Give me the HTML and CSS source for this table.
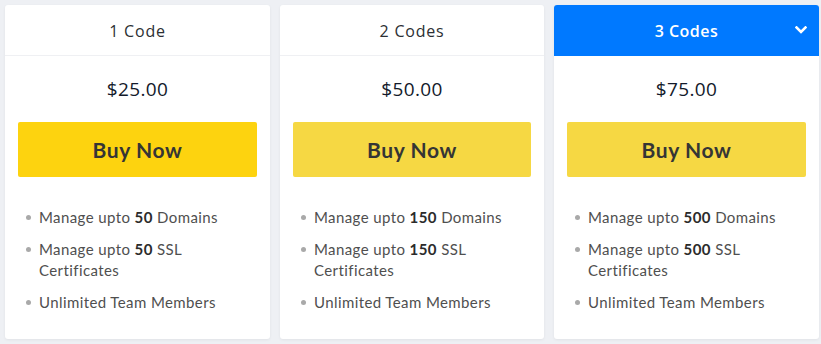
FILE: index.html
```html
<!DOCTYPE html>
<html>
<head>
<meta charset="utf-8">
<link rel="stylesheet" href="styles.css">
</head>
<body>
<div class="plans">
  <div class="card">
    <div class="head">1 Code</div>
    <div class="price">$25.00</div>
    <div class="btn-wrap"><button class="buy buy-strong">Buy Now</button></div>
    <ul class="features">
      <li>Manage upto <b>50</b> Domains</li>
      <li>Manage upto <b>50</b> SSL Certificates</li>
      <li>Unlimited Team Members</li>
    </ul>
  </div>
  <div class="card">
    <div class="head">2 Codes</div>
    <div class="price">$50.00</div>
    <div class="btn-wrap"><button class="buy">Buy Now</button></div>
    <ul class="features">
      <li>Manage upto <b>150</b> Domains</li>
      <li>Manage upto <b>150</b> SSL Certificates</li>
      <li>Unlimited Team Members</li>
    </ul>
  </div>
  <div class="card">
    <div class="head head-active">3 Codes
      <svg class="chev" width="12" height="8" viewBox="0 0 12 8"><path d="M1.5 1.5 L6 6 L10.5 1.5" fill="none" stroke="#fff" stroke-width="2.6" stroke-linecap="square"/></svg>
    </div>
    <div class="price">$75.00</div>
    <div class="btn-wrap"><button class="buy">Buy Now</button></div>
    <ul class="features">
      <li>Manage upto <b>500</b> Domains</li>
      <li>Manage upto <b>500</b> SSL Certificates</li>
      <li>Unlimited Team Members</li>
    </ul>
  </div>
</div>
</body>
</html>
```
FILE: styles.css
```css
html, body {
  margin: 0;
  padding: 0;
  background: #eef0f4;
}
body {
  width: 821px;
  height: 344px;
  overflow: hidden;
}
.plans {
  display: grid;
  grid-template-columns: 265px 264px 265px;
  gap: 10px;
  padding: 5px 2px 0 5px;
}
.card {
  background: #fff;
  height: 334px;
  border-radius: 3px;
  box-shadow: 0 1px 3px rgba(0,0,0,0.06);
  display: flex;
  flex-direction: column;
  overflow: hidden;
}
.head {
  height: 49px;
  padding-top: 1px;
  border-bottom: 1px solid #eff0f3;
  display: flex;
  align-items: center;
  justify-content: center;
  font-family: "Open Sans", sans-serif;
  font-size: 16px;
  letter-spacing: 0.8px;
  color: #2c2f33;
  position: relative;
}
.head-active {
  background: #0079ff;
  color: #fff;
  font-weight: 600;
  letter-spacing: 0.5px;
  border-bottom-color: #0079ff;
}
.chev {
  position: absolute;
  right: 12px;
  top: 21px;
}
.price {
  height: 66px;
  display: flex;
  align-items: center;
  justify-content: center;
  font-family: "Open Sans", sans-serif;
  font-size: 19px;
  letter-spacing: 0.4px;
  color: #131a2b;
  font-weight: 500;
}
.btn-wrap {
  padding: 0 13px;
}
.buy {
  width: 100%;
  height: 55px;
  border: none;
  border-radius: 2px;
  background: #f6d843;
  font-family: "Lato", sans-serif;
  font-weight: 700;
  font-size: 21px;
  color: #353535;
  padding: 0 0 1px 0;
  letter-spacing: 0.6px;
}
.buy-strong {
  background: #fdd30f;
}
.features {
  list-style: none;
  margin: 0;
  padding: 30px 15px 0 20px;
  font-family: "Lato", sans-serif;
  font-size: 15px;
  letter-spacing: 0.4px;
  color: #4f4f4f;
  line-height: 21px;
}
.features li {
  position: relative;
  padding-left: 14px;
  margin-bottom: 11px;
}
.features li::before {
  content: "";
  position: absolute;
  left: 1px;
  top: 8px;
  width: 5px;
  height: 5px;
  border-radius: 50%;
  background: #a9a9a9;
}
.features b {
  color: #2b2b2b;
  font-weight: 700;
}
```
